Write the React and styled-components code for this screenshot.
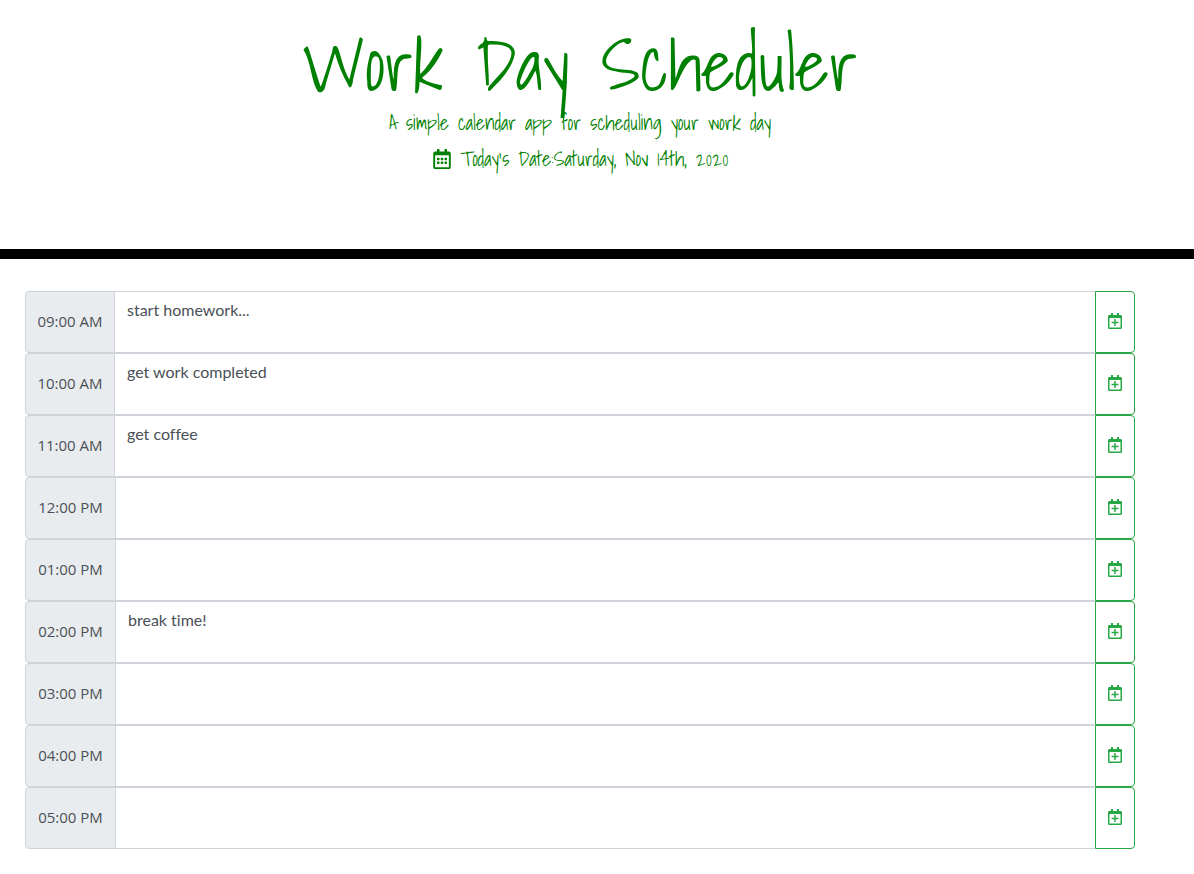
import React from "react";
import styled, { createGlobalStyle } from "styled-components";
import { FaRegCalendarAlt, FaRegCalendarPlus } from "react-icons/fa";

const GlobalStyle = createGlobalStyle`
  *, *::before, *::after { box-sizing: border-box; }
  body {
    margin: 0;
    background: #fff;
    color: #495057;
    font: 400 16px/24px Lato, sans-serif;
    font-variant-ligatures: none;
  }
`;

const Header = styled.header`
  display: flex;
  flex-direction: column;
  align-items: center;
  padding: 24px 34px 72px 0;
  border-bottom: 10px solid #000;
  color: #008000;
  font-family: "Shadows Into Light", "Liberation Sans Narrow", Lato, sans-serif;
  text-align: center;
`;

const Title = styled.h1`
  margin: 0;
  font-size: 72px;
  font-weight: 300;
  line-height: 81px;
`;

const Lead = styled.p`
  display: flex;
  align-items: center;
  gap: 9px;
  margin: 0;
  font-size: 20px;
  font-weight: 300;
  line-height: 36px;
`;

const Schedule = styled.main`
  padding: 32px 34px 24px 0;
`;

const Container = styled.div`
  max-width: 1140px;
  margin: 0 auto;
  padding: 0 15px;
`;

const TimeBlock = styled.div`
  display: flex;
  height: 62px;
`;

const Hour = styled.label`
  display: flex;
  align-items: center;
  justify-content: center;
  flex: 0 0 ${(p) => (p.$afternoon ? 91 : 90)}px;
  padding-bottom: 2px;
  border: 1px solid #ced4da;
  border-radius: 4px 0 0 4px;
  background: #e9ecef;
  font-family: "Trebuchet MS", "Open Sans", sans-serif;
  font-size: 15px;
  white-space: nowrap;
`;

const Task = styled.textarea`
  flex: 1 1 auto;
  min-width: 0;
  margin: 0 0 0 -1px;
  padding: 6px 12px;
  border: 1px solid #ced4da;
  border-radius: 0;
  background: #fff;
  color: #495057;
  font: inherit;
  font-variant-ligatures: none;
  resize: none;
`;

const SaveButton = styled.button`
  display: flex;
  align-items: center;
  justify-content: center;
  flex: 0 0 40px;
  margin-left: -1px;
  padding: 0 0 2px;
  border: 1px solid #28a745;
  border-radius: 0 4px 4px 0;
  background: #fff;
  color: #28a745;
  font-size: 16px;
  cursor: pointer;
`;

const blocks = [
  { time: "09:00 AM", task: "start homework..." },
  { time: "10:00 AM", task: "get work completed" },
  { time: "11:00 AM", task: "get coffee" },
  { time: "12:00 PM", task: "" },
  { time: "01:00 PM", task: "" },
  { time: "02:00 PM", task: "break time!" },
  { time: "03:00 PM", task: "" },
  { time: "04:00 PM", task: "" },
  { time: "05:00 PM", task: "" },
];

export default function App() {
  return (
    <>
      <GlobalStyle />
      <Header>
        <Title>Work Day Scheduler</Title>
        <Lead>A simple calendar app for scheduling your work day</Lead>
        <Lead>
          <FaRegCalendarAlt aria-hidden="true" />
          <span>Today's Date:Saturday, Nov 14th, 2020</span>
        </Lead>
      </Header>
      <Schedule>
        <Container>
          {blocks.map(({ time, task }, i) => (
            <TimeBlock key={time}>
              <Hour htmlFor={`task-${i}`} $afternoon={time.endsWith("PM")}>
                {time}
              </Hour>
              <Task id={`task-${i}`} defaultValue={task} />
              <SaveButton type="button" aria-label={`Save ${time}`}>
                <FaRegCalendarPlus aria-hidden="true" />
              </SaveButton>
            </TimeBlock>
          ))}
        </Container>
      </Schedule>
    </>
  );
}
